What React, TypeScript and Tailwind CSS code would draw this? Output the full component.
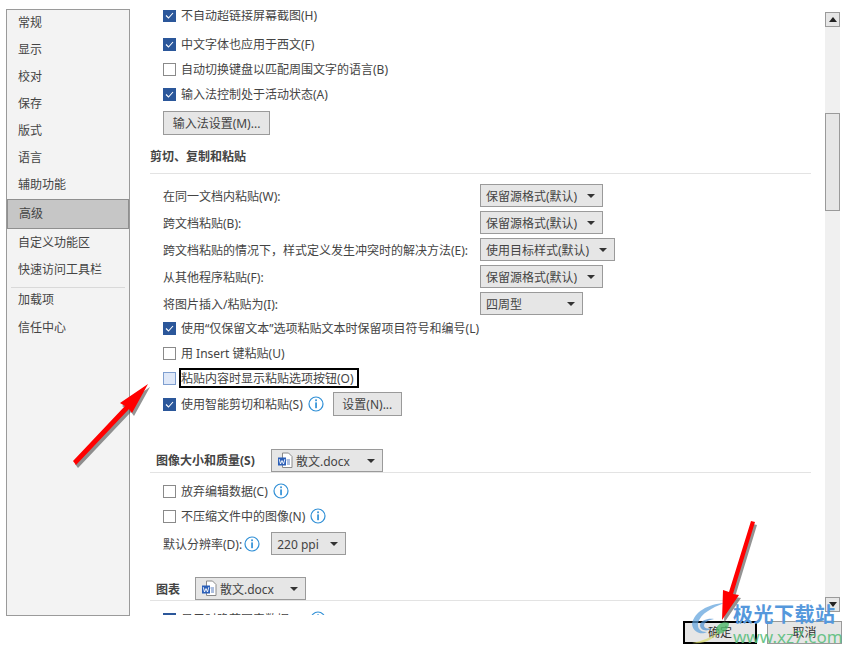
import type { ReactNode } from "react";

const font = "font-['Noto_Sans','Noto_Sans_CJK_SC',sans-serif]";

const navItems = ["常规", "显示", "校对", "保存", "版式", "语言", "辅助功能"];

const Check = ({ on, hover }: { on?: boolean; hover?: boolean }) => (
  <span
    className={`w-[13px] h-[13px] shrink-0 flex items-center justify-center border ${
      on
        ? "bg-[#2b579a] border-[#2b579a]"
        : hover
          ? "bg-[#dfe8f8] border-[#7f9fd0]"
          : "bg-white border-[#8a8a8a]"
    }`}
  >
    {on && (
      <svg width="11" height="11" viewBox="0 0 11 11" fill="none">
        <path d="M2 5.5 L4.5 8 L9 3" stroke="white" strokeWidth="1.1" />
      </svg>
    )}
  </span>
);

const Info = () => (
  <svg width="16" height="16" viewBox="0 0 16 16" className="shrink-0">
    <circle cx="8" cy="8" r="7" fill="white" stroke="#2f8fd6" strokeWidth="1.2" />
    <rect x="7.2" y="3.4" width="1.7" height="1.8" fill="#2f8fd6" />
    <rect x="7.2" y="6.4" width="1.7" height="5.8" fill="#2f8fd6" />
  </svg>
);

const Caret = () => (
  <span className="w-0 h-0 border-x-[4px] border-x-transparent border-t-[4px] border-t-[#333]" />
);

const Select = ({ label, width }: { label: string; width: string }) => (
  <div
    className={`${width} h-[23px] flex items-center justify-between pl-[5px] pr-[7px] bg-[#e6e6e6] border border-[#9a9a9a] text-[12px] text-[#444]`}
  >
    <span className="pt-[2px]">{label}</span>
    <Caret />
  </div>
);

const DocSelect = ({ width }: { width: string }) => (
  <div
    className={`${width} h-[23px] flex items-center justify-between pl-[5px] pr-[7px] bg-[#e6e6e6] border border-[#9a9a9a] text-[12px] font-normal text-[#444]`}
  >
    <span className="flex items-center gap-[3px]">
      <svg width="16" height="17" viewBox="0 0 16 17" fill="none">
        <path d="M5.5 1 H11.5 L15 4.5 V15.5 H5.5 Z" fill="white" stroke="#8a8a8a" />
        <path d="M9.5 8 H13 M10 10 H13 M10 12 H13" stroke="#5b7fc0" />
        <rect x="1" y="5.5" width="8" height="8" fill="#2b5fb8" />
        <path d="M2.3 7.2 L3.5 12 L5 8.5 L6.5 12 L7.8 7.2" stroke="white" strokeWidth="0.9" />
      </svg>
      <span className="pt-[2px]">散文.docx</span>
    </span>
    <Caret />
  </div>
);

const Button = ({ label, className }: { label: string; className: string }) => (
  <div
    className={`h-[24px] pt-[1px] flex items-center justify-center bg-[#e6e6e6] border border-[#9a9a9a] text-[12px] text-[#444] ${className}`}
  >
    {label}
  </div>
);

const CheckRow = ({
  on,
  label,
  info,
  className = "",
}: {
  on?: boolean;
  label: string;
  info?: boolean;
  className?: string;
}) => (
  <div className={`flex items-center gap-[5px] text-[12px] text-[#444] whitespace-nowrap ${className}`}>
    <Check on={on} />
    <span className="pt-[2px]">{label}</span>
    {info && <Info />}
  </div>
);

const SelectRow = ({
  label,
  select,
  width,
}: {
  label: string;
  select: string;
  width: string;
}) => (
  <div className="h-[27px] flex items-center text-[12px] text-[#444] whitespace-nowrap">
    <span className="w-[317px] pt-[2px]">{label}</span>
    <Select label={select} width={width} />
  </div>
);

const Heading = ({ children, className = "" }: { children: ReactNode; className?: string }) => (
  <div
    className={`flex items-center border-b border-[#e3e3e3] text-[12px] font-bold text-[#444] whitespace-nowrap w-[661px] ${className}`}
  >
    {children}
  </div>
);

const ScrollButton = ({ up }: { up?: boolean }) => (
  <div className="h-[15px] flex items-center justify-center bg-[#e6e6e6] border border-[#9a9a9a]">
    <span
      className={`w-0 h-0 border-x-[4px] border-x-transparent ${
        up ? "border-b-[5px] border-b-[#222]" : "border-t-[5px] border-t-[#222]"
      }`}
    />
  </div>
);

const RedArrows = () => (
  <svg width="848" height="653" viewBox="0 0 848 653" className="absolute inset-0 pointer-events-none">
    <g fill="#3a3a3a" opacity="0.55" transform="translate(2 3)">
      <path d="M73 461 L125 406 L120 403 L148 384 L132 413 L129 409 L76 465 Z" />
      <path d="M751 521 L755 522 L733 594 L739 595 L722 620 L723 590 L729 592 Z" />
    </g>
    <g fill="#ff0000">
      <path d="M73 461 L125 406 L120 403 L148 384 L132 413 L129 409 L76 465 Z" />
      <path d="M751 521 L755 522 L733 594 L739 595 L722 620 L723 590 L729 592 Z" />
    </g>
  </svg>
);

const Watermark = () => (
  <div className="absolute left-[688px] top-[600px] w-[156px] h-[50px] pointer-events-none">
    <svg width="46" height="48" viewBox="0 0 46 48" className="absolute left-0 top-0">
      <path
        d="M4 24 C6 12 20 4 36 3 C24 8 13 13 10 23 C9 29 13 32 19 32 C14 35 5 33 4 24 Z"
        fill="#5b9fdc"
        opacity="0.7"
      />
      <path
        d="M12 25 C13 20 20 18 26 19 C21 20 16 22 16 26 C17 29 21 29 24 28 C20 32 12 31 12 25 Z"
        fill="#4a8fd0"
        opacity="0.7"
      />
      <path d="M28 29 C30 23 36 21 41 23 C41 29 36 34 29 34 Z" fill="#4fb96a" opacity="0.8" />
      <path d="M4 43 C14 41 24 38 32 30 C28 38 16 45 4 43 Z" fill="#d9dc6a" opacity="0.7" />
    </svg>
    <div className="absolute left-[45px] top-[1px] text-[20px] leading-[26px] font-bold tracking-[0.5px] text-[#5598dc] whitespace-nowrap font-['Noto_Sans_CJK_SC',sans-serif]">
      极光下载站
    </div>
    <div className="absolute left-[45px] top-[26px] text-[17px] leading-[22px] text-[#5cbf7e] opacity-90 whitespace-nowrap font-['Noto_Sans',sans-serif]">
      www.xz7.com
    </div>
  </div>
);

export default function App() {
  return (
    <div className={`relative w-[848px] h-[653px] overflow-hidden bg-white ${font}`}>
      <div className="flex h-[616px] pt-[9px] pl-[6px]">
        {/* left nav */}
        <div className="w-[124px] h-[607px] shrink-0 bg-[#f3f3f3] border border-[#9a9a9a] text-[12px] text-[#444]">
          {navItems.map((item) => (
            <div key={item} className="h-[27px] pl-[11px] pb-[2px] flex items-center">
              {item}
            </div>
          ))}
          <div className="h-[30px] pl-[11px] pb-[1px] flex items-center bg-[#c6c6c6] border border-[#8f8f8f]">
            高级
          </div>
          <div className="h-[27px] pl-[11px] flex items-center">自定义功能区</div>
          <div className="h-[27px] pl-[11px] flex items-center">快速访问工具栏</div>
          <div className="mx-[4px] mt-[4px] border-t border-[#d9d9d9]" />
          <div className="h-[27px] pl-[11px] pb-[3px] flex items-center">加载项</div>
          <div className="h-[27px] pl-[11px] pb-[2px] flex items-center">信任中心</div>
        </div>

        {/* settings */}
        <div className="w-[681px] h-[605px] mt-[1px] overflow-hidden pl-[20px]">
          <div className="w-[661px] -mt-[4px]">
            <div className="pl-[13px] flex flex-col">
              <CheckRow on label="不自动超链接屏幕截图(H)" className="h-[18px]" />
              <CheckRow on label="中文字体也应用于西文(F)" className="h-[18px] mt-[11px]" />
              <CheckRow label="自动切换键盘以匹配周围文字的语言(B)" className="h-[18px] mt-[7px]" />
              <CheckRow on label="输入法控制处于活动状态(A)" className="h-[18px] mt-[7px]" />
              <Button label="输入法设置(M)..." className="w-[107px] mt-[8px]" />
            </div>
            <Heading className="mt-[9px] h-[30px] pb-[3px]">剪切、复制和粘贴</Heading>
            <div className="pl-[13px] pt-[8px] flex flex-col">
              <SelectRow label="在同一文档内粘贴(W):" select="保留源格式(默认)" width="w-[123px]" />
              <SelectRow label="跨文档粘贴(B):" select="保留源格式(默认)" width="w-[123px]" />
              <SelectRow label="跨文档粘贴的情况下，样式定义发生冲突时的解决方法(E):" select="使用目标样式(默认)" width="w-[135px]" />
              <SelectRow label="从其他程序粘贴(F):" select="保留源格式(默认)" width="w-[123px]" />
              <SelectRow label="将图片插入/粘贴为(I):" select="四周型" width="w-[103px]" />
              <CheckRow on label="使用“仅保留文本”选项粘贴文本时保留项目符号和编号(L)" className="h-[18px] mt-[2px]" />
              <CheckRow label="用 Insert 键粘贴(U)" className="h-[18px] mt-[7px]" />
              <div className="relative flex items-center gap-[5px] h-[18px] mt-[7px] text-[12px] text-[#444] whitespace-nowrap">
                <Check hover />
                <span className="pt-[2px]">粘贴内容时显示粘贴选项按钮(O)</span>
                <span className="absolute left-[16px] -top-[1px] w-[180px] h-[20px] border-2 border-black" />
              </div>
              <div className="flex items-center gap-[5px] h-[18px] mt-[8px] text-[12px] text-[#444] whitespace-nowrap">
                <Check on />
                <span className="pt-[2px]">使用智能剪切和粘贴(S)</span>
                <Info />
                <Button label="设置(N)..." className="w-[69px] ml-[4px]" />
              </div>
            </div>
            <Heading className="mt-[36px] h-[24px]">
              <span className="w-[121px] pl-[6px]">图像大小和质量(S)</span>
              <DocSelect width="w-[112px]" />
            </Heading>
            <div className="pl-[13px] pt-[9px] flex flex-col">
              <CheckRow label="放弃编辑数据(C)" info className="h-[18px]" />
              <CheckRow label="不压缩文件中的图像(N)" info className="h-[18px] mt-[7px]" />
              <div className="flex items-center gap-[2px] h-[23px] mt-[7px] text-[12px] text-[#444] whitespace-nowrap">
                <span className="pt-[2px]">默认分辨率(D):</span>
                <Info />
                <span className="w-[7px]" />
                <Select label="220 ppi" width="w-[75px]" />
              </div>
            </div>
            <Heading className="mt-[22px] h-[24px]">
              <span className="w-[45px] pl-[6px] pt-[2px]">图表</span>
              <DocSelect width="w-[111px]" />
            </Heading>
            <div className="pl-[13px] pt-[9px]">
              <CheckRow on label="显示时隐藏图表数据(H)" info className="h-[18px]" />
            </div>
          </div>
        </div>

        {/* scrollbar */}
        <div className="w-[15px] h-[600px] shrink-0 ml-[14px] mt-[3px] flex flex-col bg-[#f0f0f0]">
          <ScrollButton up />
          <div className="h-[98px] mt-[86px] bg-[#e6e6e6] border border-[#9a9a9a]" />
          <div className="flex-1" />
          <ScrollButton />
        </div>
      </div>

      {/* footer buttons */}
      <div className="flex justify-end gap-[10px] pr-[6px] pt-[5px]">
        <div className="w-[74px] h-[23px] flex items-center justify-center bg-[#e6e6e6] border-2 border-black text-[12px] text-[#333]">
          确定
        </div>
        <div className="w-[75px] h-[23px] flex items-center justify-center bg-[#e6e6e6] border border-[#9a9a9a] text-[12px] text-[#333]">
          取消
        </div>
      </div>

      <Watermark />
      <RedArrows />
    </div>
  );
}
